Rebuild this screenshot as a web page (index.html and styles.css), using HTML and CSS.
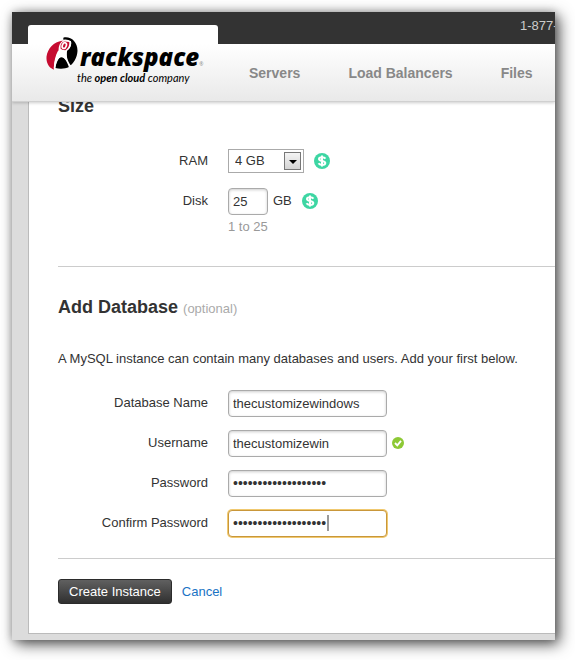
FILE: index.html
```
<!DOCTYPE html>
<html lang="en">
<head>
  <meta charset="utf-8">
  <title>Create Instance</title>
  <link rel="stylesheet" href="styles.css">
</head>
<body>
  <div class="window">
    <header class="header">
      <div class="topbar"><span class="phone">1-877-</span></div>
      <div class="navbar">
        <a class="logo" href="#">
          <svg class="logo-mark" viewBox="0 0 96 100" aria-hidden="true">
            <path fill="#c60c30" d="M23 99C6 92 0 76 1 60C4 34 24 14 48 11L66 12L62 34L38 42Q24 68 23 99Z"/>
            <path fill="#000" d="M52 2C74-3 95 14 95 42C94 62 84 82 66 92C63 74 60 52 64 40C74 34 78 22 75 13Q66 6 52 8Z"/>
            <path fill="#000" d="M28 94C30 76 36 62 46 60C56 60 66 76 69 91C58 97 40 97 28 94Z"/>
            <path fill="#fff" d="M36 42L62 38L62 54Q64 74 76 88L69 92C64 74 56 61 46 61C36 62 31 78 27 95H23C24 74 28 56 36 42Z"/>
            <path fill="#fff" d="M38 44C36 30 42 14 54 10L75 12C78 26 70 40 60 42Z"/>
            <path fill="#c60c30" d="M44 34C42 22 48 15 56 14L70 15C71 24 68 31 63 36L58 40L48 39Z"/>
            <ellipse cx="55" cy="26" rx="6" ry="9" transform="rotate(20 55 26)" fill="#c60c30" stroke="#fff" stroke-width="5"/>
          </svg>
          <span class="logo-words">
            <span class="logo-name">rackspace<small>®</small></span>
            <span class="logo-tag">the <b>open cloud</b> company</span>
          </span>
        </a>
        <nav class="nav">
          <a href="#">Servers</a>
          <a href="#">Load Balancers</a>
          <a href="#">Files</a>
        </nav>
      </div>
    </header>

    <main class="page">
      <form class="panel">
        <section class="section section-size">
          <h2>Size</h2>
          <div class="row">
            <label for="ram">RAM</label>
            <span class="select">
              <select id="ram"><option>4 GB</option></select>
              <span class="arrow"></span>
            </span>
            <svg class="price" viewBox="0 0 16 16" aria-hidden="true">
              <circle cx="8" cy="8" r="8" fill="#3dd6a3"/>
              <path d="M11.500 5.600C10.700 4.500 9.500 4.200 8 4.200C6.200 4.200 5 4.900 5 6C5 8.500 11.300 7.300 11.300 10C11.300 11.200 9.900 11.900 8 11.900C6.400 11.900 5.200 11.400 4.500 10.300M8 2.500V13.500" fill="none" stroke="#fff" stroke-width="2"/>
            </svg>
          </div>
          <div class="row">
            <label for="disk">Disk</label>
            <input class="short" id="disk" type="text" value="25">
            <span class="unit">GB</span>
            <svg class="price" viewBox="0 0 16 16" aria-hidden="true">
              <circle cx="8" cy="8" r="8" fill="#3dd6a3"/>
              <path d="M11.500 5.600C10.700 4.500 9.500 4.200 8 4.200C6.200 4.200 5 4.900 5 6C5 8.500 11.300 7.300 11.300 10C11.300 11.200 9.900 11.900 8 11.900C6.400 11.900 5.200 11.400 4.500 10.300M8 2.500V13.500" fill="none" stroke="#fff" stroke-width="2"/>
            </svg>
          </div>
          <p class="hint">1 to 25</p>
        </section>

        <section class="section section-db">
          <h2>Add Database <small>(optional)</small></h2>
          <p class="intro">A MySQL instance can contain many databases and users. Add your first below.</p>
          <div class="row">
            <label for="dbname">Database Name</label>
            <input id="dbname" type="text" value="thecustomizewindows">
          </div>
          <div class="row">
            <label for="username">Username</label>
            <input id="username" type="text" value="thecustomizewin">
            <svg class="valid" viewBox="0 0 12 12" aria-hidden="true">
              <circle cx="6" cy="6" r="6" fill="#8dc935"/>
              <path d="M3 6L5.300 8.300L9 3.800" fill="none" stroke="#fff" stroke-width="1.900"/>
            </svg>
          </div>
          <div class="row">
            <label for="password">Password</label>
            <input id="password" type="password" value="customizewindows123">
          </div>
          <div class="row">
            <label for="confirm">Confirm Password</label>
            <span class="focused">
              <input id="confirm" type="password" value="customizewindows123">
              <span class="caret"></span>
            </span>
          </div>
        </section>

        <div class="actions">
          <button type="button">Create Instance</button>
          <a href="#">Cancel</a>
        </div>
      </form>
    </main>
  </div>
</body>
</html>
```
FILE: styles.css
```
* {
    box-sizing: border-box;
}

body {
    margin: 0;
    padding: 12px 20px 20px 12px;
    background: #fff;
    color: #333;
    font: 13px/16px "Liberation Sans", Arial, sans-serif;
}

a {
    color: #1a73c4;
    text-decoration: none;
}

.window {
    overflow: hidden;
    background: #dcdcdc;
    box-shadow: 4px 4px 14px rgba(0, 0, 0, .7), 0 0 8px rgba(0, 0, 0, .2);
}

/* header */
.header {
    position: relative;
    z-index: 1;
    box-shadow: 0 1px 3px rgba(0, 0, 0, .2);
}

.topbar {
    display: flex;
    justify-content: flex-end;
    height: 32px;
    padding-top: 6px;
    background: #333;
    color: #ccc;
    white-space: nowrap;
}

/* the number runs on past the window edge */
.phone {
    width: 35px;
}

.navbar {
    display: flex;
    height: 58px;
    padding-left: 16px;
    background: linear-gradient(#fff, #e9e9e9);
    border-bottom: 1px solid #d0d0d0;
}

.logo {
    display: flex;
    flex: none;
    gap: 2px;
    width: 190px;
    height: 64px;
    margin-top: -19px;
    padding: 12px 0 0 18px;
    border-radius: 3px 3px 0 0;
    background: linear-gradient(#fff 19px, transparent 19px);
    color: #000;
}

.logo-mark {
    flex: none;
    width: 32px;
    height: 33px;
}

.logo-words {
    display: flex;
    flex-direction: column;
    padding-top: 11px;
    white-space: nowrap;
}

.logo-name {
    font: italic 800 24px/18px "Open Sans", "Noto Sans", sans-serif;
}

.logo-name small {
    color: #888;
    font-size: 5px;
    font-weight: 400;
}

.logo-tag {
    margin-left: -3px;
    font: italic 11px/10px Lato, sans-serif;
}

.nav {
    display: flex;
    gap: 48px;
    padding: 20px 0 0 31px;
    font-size: 14px;
    font-weight: bold;
    line-height: 18px;
    white-space: nowrap;
}

.nav a {
    color: #888;
}

/* content */
.page {
    padding: 0 0 6px 16px;
}

.panel {
    padding-left: 29px;
    background: #fff;
    border: 1px solid #bbb;
    border-width: 0 0 1px 1px;
}

.section {
    border-bottom: 1px solid #ccc;
}

.section-size {
    height: 172px;
}

.section-db {
    padding: 29px 0 15px;
}

h2 {
    margin: 0;
    font-size: 18px;
    line-height: 22px;
}

h2 small {
    color: #aaa;
    font-size: 13px;
    font-weight: normal;
}

/* scrolled partly under the header */
.section-size h2 {
    margin: -7px 0 24px;
}

.row {
    display: flex;
    align-items: center;
    height: 40px;
}

.row label {
    width: 150px;
    margin-right: 20px;
    text-align: right;
}

input {
    width: 159px;
    height: 27px;
    padding: 0 4px;
    border: 1px solid #aaa;
    border-radius: 4px;
    background: #fff;
    box-shadow: inset 0 1px 3px rgba(0, 0, 0, .2);
    color: #333;
    font: inherit;
}

input[type=password] {
    font-size: 14px;
}

.short {
    width: 40px;
}

.unit {
    margin-left: 5px;
}

.select {
    position: relative;
}

select {
    display: block;
    width: 76px;
    height: 24px;
    padding: 0 6px;
    appearance: none;
    border: 1px solid #aaa;
    border-radius: 0;
    background: #fff;
    color: #333;
    font: inherit;
}

.arrow {
    position: absolute;
    top: 3px;
    right: 3px;
    width: 17px;
    height: 18px;
    border: 1px solid #777;
    background: linear-gradient(#f4f4f4, #d4d4d4);
    pointer-events: none;
}

.arrow::after {
    content: "";
    position: absolute;
    top: 7px;
    left: 4px;
    border: 4px solid transparent;
    border-width: 4px 4px 0;
    border-top-color: #000;
}

.price {
    width: 16px;
    height: 16px;
    margin-left: 10px;
}

.valid {
    width: 12px;
    height: 12px;
    margin-left: 5px;
}

.hint {
    margin: -2px 0 0 170px;
    color: #999;
}

.intro {
    margin: 31px 0 16px;
}

.focused {
    position: relative;
}

.focused input {
    display: block;
    border-color: #c9973a;
    box-shadow: 0 0 0 1px #f0c970;
}

.caret {
    position: absolute;
    top: 5px;
    left: 99px;
    width: 2px;
    height: 16px;
    background: #999;
}

/* buttons */
.actions {
    display: flex;
    align-items: center;
    gap: 10px;
    padding: 20px 0 29px;
}

button {
    height: 25px;
    padding: 0 10px;
    border: 1px solid #2b2b2b;
    border-radius: 3px;
    background: linear-gradient(#606060, #303030);
    color: #fff;
    font: inherit;
}
```
